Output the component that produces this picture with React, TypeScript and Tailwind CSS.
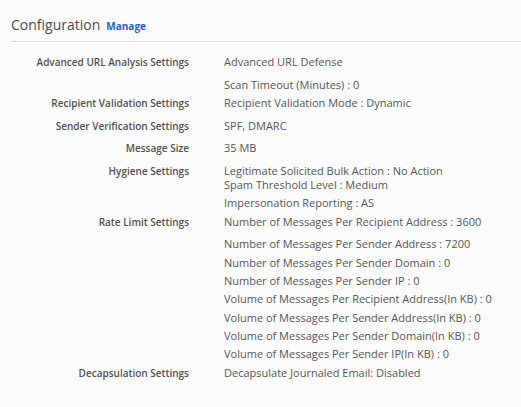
import React from "react";

interface Row {
  label: string;
  top: number;
  lines: { text: string; gap?: number }[];
}

const rows: Row[] = [
  {
    label: "Advanced URL Analysis Settings",
    top: 0,
    lines: [{ text: "Advanced URL Defense" }, { text: "Scan Timeout (Minutes) : 0", gap: 9 }],
  },
  { label: "Recipient Validation Settings", top: 4, lines: [{ text: "Recipient Validation Mode : Dynamic" }] },
  { label: "Sender Verification Settings", top: 9, lines: [{ text: "SPF, DMARC" }] },
  { label: "Message Size", top: 8, lines: [{ text: "35 MB" }] },
  {
    label: "Hygiene Settings",
    top: 9,
    lines: [
      { text: "Legitimate Solicited Bulk Action : No Action" },
      { text: "Spam Threshold Level : Medium", gap: 0 },
      { text: "Impersonation Reporting : AS", gap: 4 },
    ],
  },
  {
    label: "Rate Limit Settings",
    top: 5,
    lines: [
      { text: "Number of Messages Per Recipient Address : 3600" },
      { text: "Number of Messages Per Sender Address : 7200", gap: 8 },
      { text: "Number of Messages Per Sender Domain : 0", gap: 5 },
      { text: "Number of Messages Per Sender IP : 0", gap: 4 },
      { text: "Volume of Messages Per Recipient Address(In KB) : 0", gap: 4 },
      { text: "Volume of Messages Per Sender Address(In KB) : 0", gap: 5 },
      { text: "Volume of Messages Per Sender Domain(In KB) : 0", gap: 4 },
      { text: "Volume of Messages Per Sender IP(In KB) : 0", gap: 4 },
    ],
  },
  { label: "Decapsulation Settings", top: 5, lines: [{ text: "Decapsulate Journaled Email: Disabled" }] },
];

const App = () => {
  return (
    <div
      className="w-[521px] h-[407px] bg-[#fcfcfc] text-[#555] overflow-hidden"
      style={{ fontFamily: '"Open Sans", sans-serif' }}
    >
      <div className="flex items-baseline gap-[6px] pl-[11px] pt-[15px] pb-[7px]">
        <h2 className="text-[14px] leading-[19px] text-[#4a4a4a]">Configuration</h2>
        <a href="#" className="text-[10px] font-bold text-[#1f5fc9]">
          Manage
        </a>
      </div>
      <div className="ml-[11px] h-px bg-[#dcdcdc]" />
      <div className="flex flex-col pt-[13px] text-[11px] leading-[14px]">
        {rows.map((r) => (
          <div key={r.label} className="flex" style={{ marginTop: r.top }}>
            <div className="w-[189px] shrink-0 text-right text-[10px] font-semibold text-[#505050]">{r.label}</div>
            <div className="pl-[35px] flex flex-col">
              {r.lines.map((l, i) => (
                <div key={i} style={{ marginTop: i === 0 ? 0 : l.gap ?? 0 }}>
                  {l.text}
                </div>
              ))}
            </div>
          </div>
        ))}
      </div>
    </div>
  );
};

export default App;
